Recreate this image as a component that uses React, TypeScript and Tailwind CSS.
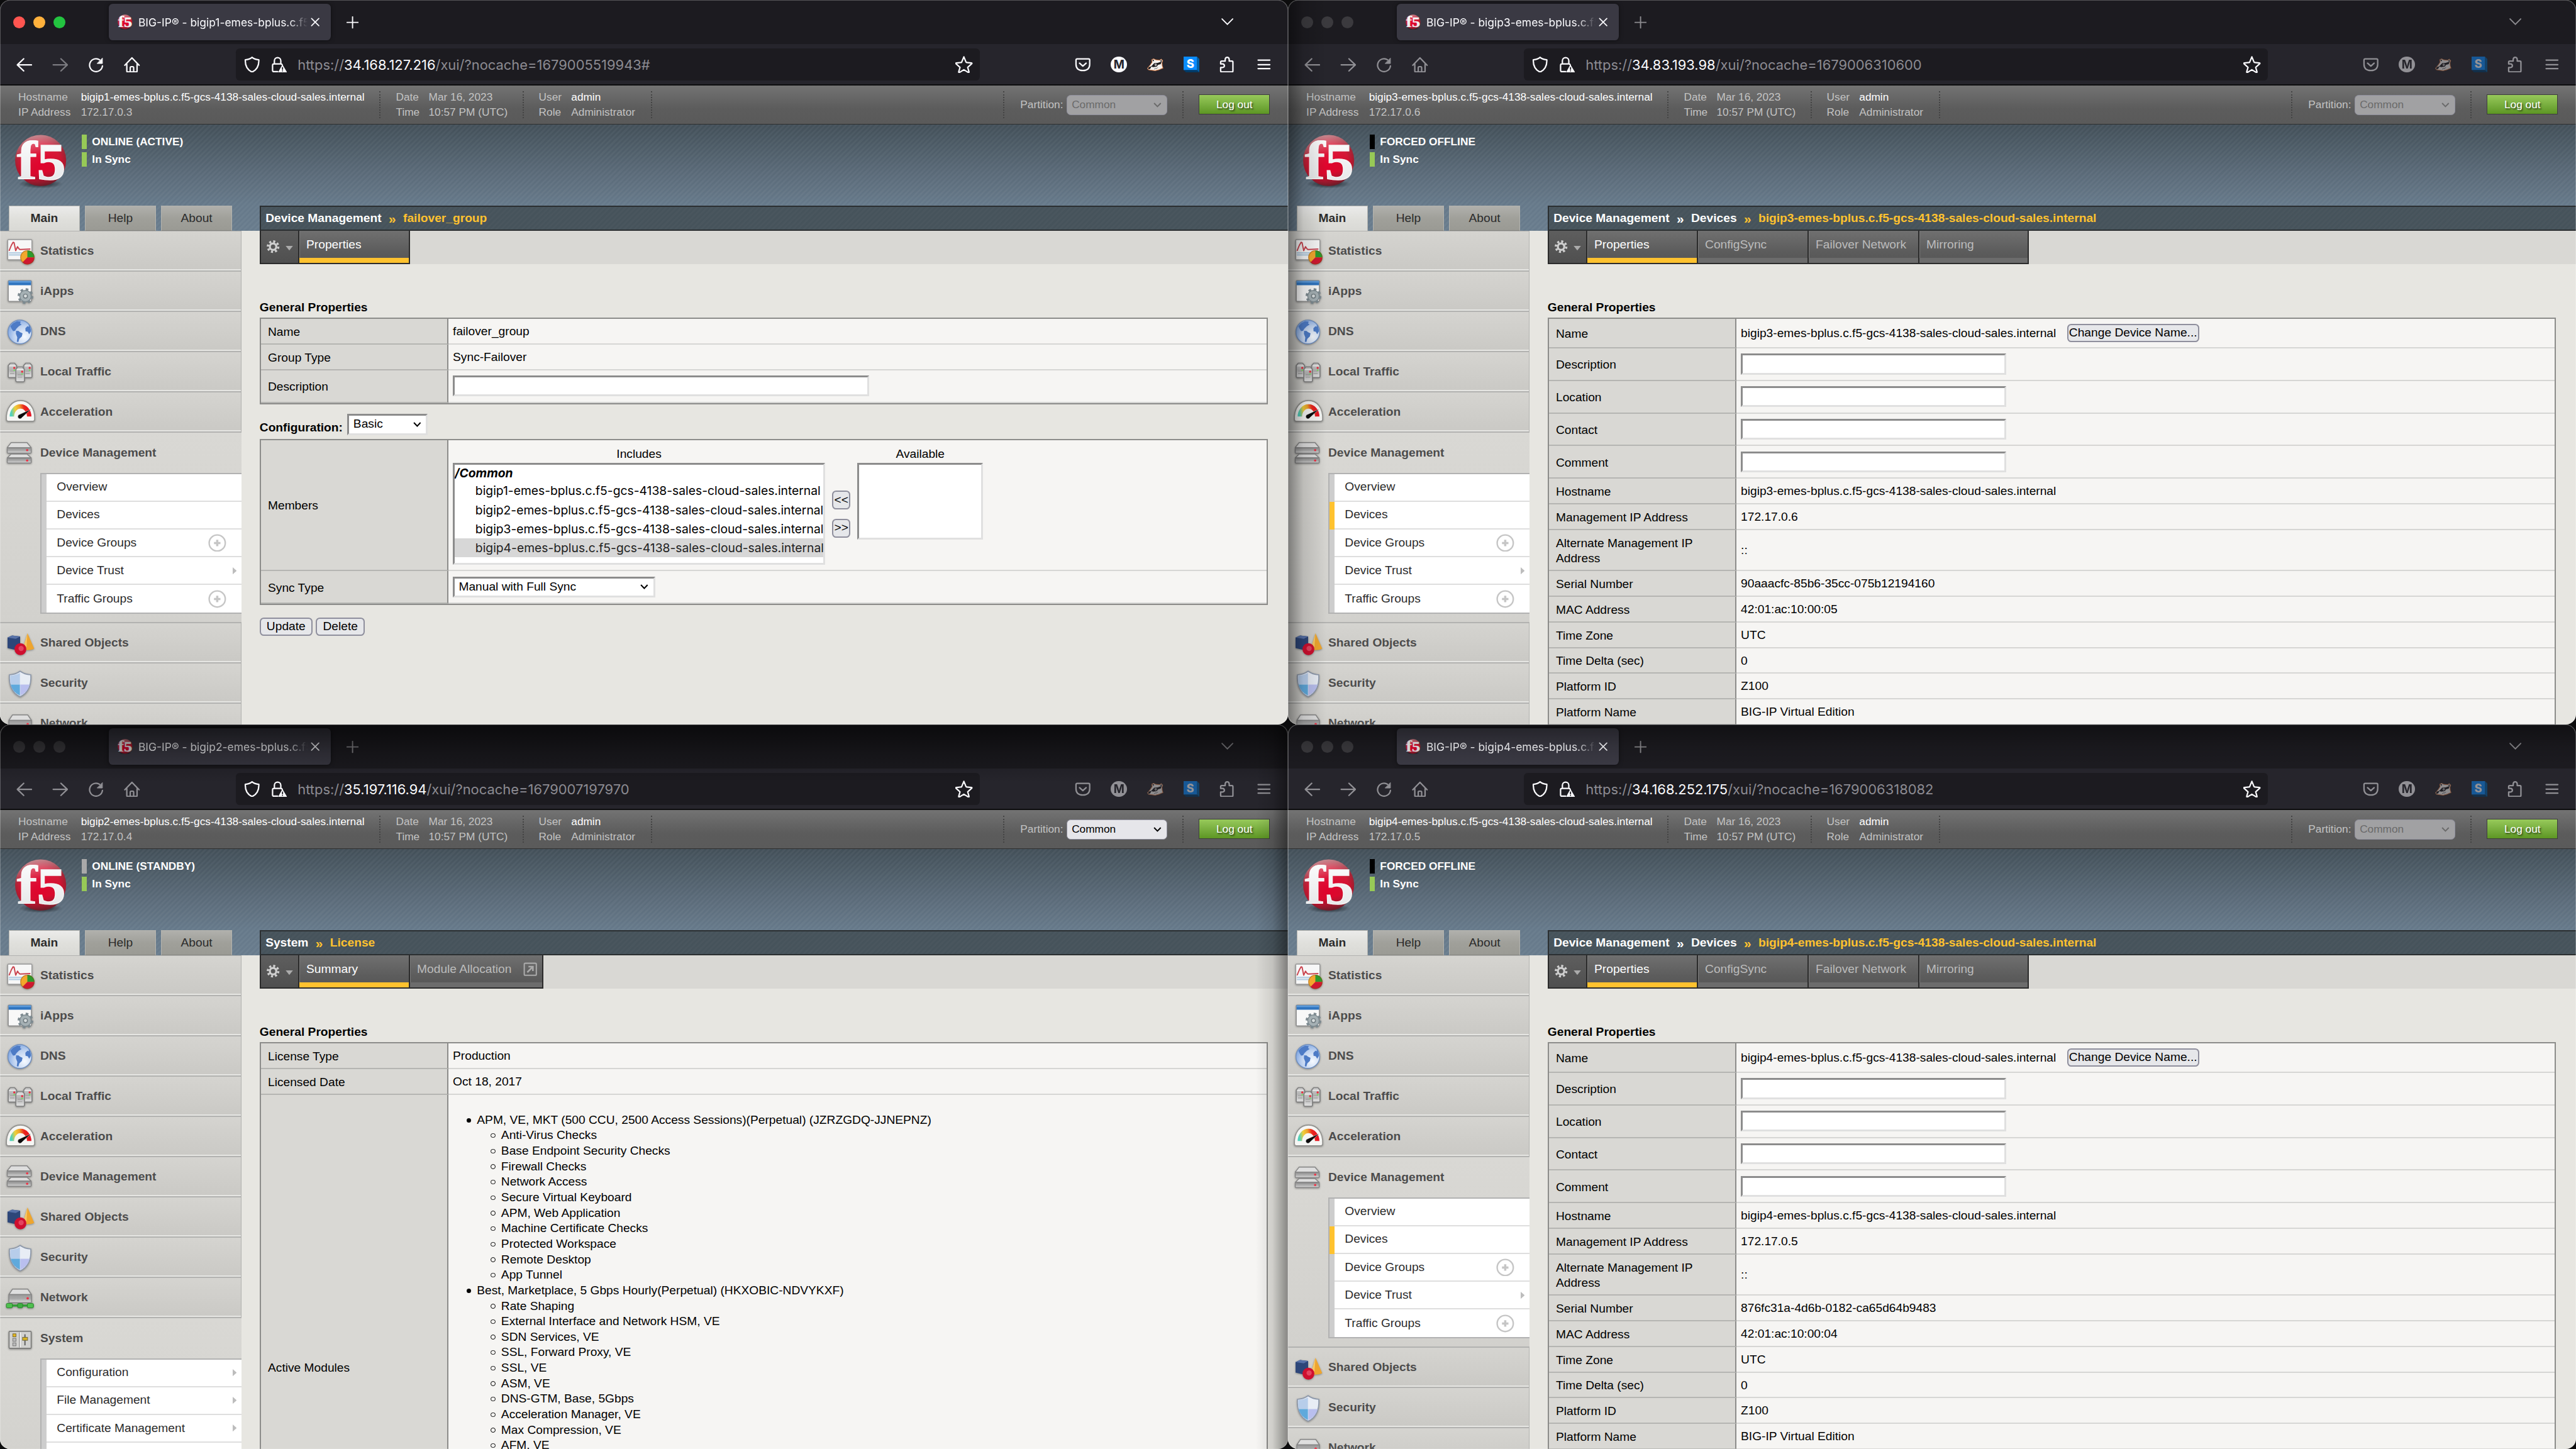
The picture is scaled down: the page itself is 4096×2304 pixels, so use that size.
import React from "react";

type Win = {
  n: number;
  ip: string;
  url: [string, string];
  active?: boolean;
  status: string;
  statusClass: string;
  partitionEnabled?: boolean;
  crumbs: string[];
  tabs: { label: string; width: string; popup?: boolean }[];
  expanded: string;
  selected?: string;
  shade: string;
};

const HOST = (n: number) => `bigip${n}-emes-bplus.c.f5-gcs-4138-sales-cloud-sales.internal`;

/* ---------- logo ---------- */

function F5Logo({ id, className }: { id: string; className: string }) {
  return (
    <svg viewBox="0 0 52 54" className={`overflow-visible ${className}`}>
      <defs>
        <radialGradient id={`${id}-ball`} cx="0.5" cy="0.55" r="0.55">
          <stop offset="0" stopColor="#e4002b" />
          <stop offset="0.7" stopColor="#d3102f" />
          <stop offset="1" stopColor="#8e1f2c" />
        </radialGradient>
        <linearGradient id={`${id}-gloss`} x1="0.3" y1="0" x2="0.5" y2="1">
          <stop offset="0" stopColor="#fff" stopOpacity="0.5" />
          <stop offset="0.4" stopColor="#fff" stopOpacity="0.05" />
          <stop offset="0.75" stopColor="#333" stopOpacity="0" />
          <stop offset="1" stopColor="#222" stopOpacity="0.5" />
        </linearGradient>
        <linearGradient id={`${id}-ink`} x1="0" y1="0" x2="0" y2="1">
          <stop offset="0" stopColor="#fff" />
          <stop offset="1" stopColor="#e2e4e6" />
        </linearGradient>
        <radialGradient id={`${id}-floor`}>
          <stop offset="0" stopColor="#000" stopOpacity="0.75" />
          <stop offset="1" stopColor="#000" stopOpacity="0" />
        </radialGradient>
      </defs>
      <ellipse cx="26" cy="49" rx="22" ry="4.5" fill={`url(#${id}-floor)`} />
      <circle cx="26" cy="25.7" r="25.4" fill={`url(#${id}-ball)`} />
      <circle cx="26" cy="25.7" r="25.4" fill={`url(#${id}-gloss)`} />
      <g fill={`url(#${id}-ink)`} fontFamily="Liberation Serif, serif" fontWeight="700">
        <text transform="translate(2.2 44.2) scale(1.13 1)" fontSize="54.5" stroke="#fff" strokeWidth="0.5">f</text>
        <text transform="translate(22.3 44.2) scale(1.1 1)" fontSize="52" stroke="#f4f4f4" strokeWidth="0.9">5</text>
      </g>
    </svg>
  );
}

/* ---------- browser chrome ---------- */

function Line({ d, className, w = 1.4 }: { d: string; className?: string; w?: number }) {
  return (
    <svg viewBox="0 0 16 16" fill="none" stroke="currentColor" strokeWidth={w} strokeLinecap="round" strokeLinejoin="round" className={className ?? "size-4"}>
      <path d={d} />
    </svg>
  );
}

function Badger() {
  return (
    <svg viewBox="0 0 16 16" className="size-4">
      <path d="M.4 11.5 3 8.500 5 5.500 4.600 3 6.500 2.200 8.500 3.200 12.500 3.600 14 2.500 15.600 4 14.800 6 15 9 15.800 11.500 14.200 12 12 13 8 14 4 13.500 1 13z" fill="#f4f1ee" stroke="#e07b3e" strokeWidth="0.6" />
      <path d="M.8 12.600 1.500 10.500 4.500 9.500 3 12.200z" fill="#1b1a1d" />
      <path d="M4 9.800 7 6.500 10.500 6.200 14.500 4.800 13.500 7.500 11 8.200 9.500 10 6 10.400z" fill="#1b1a1d" />
      <path d="M5 3.300 7 3.200 6.300 4.800zM12.800 4.300 14.200 3.300 14.800 5z" fill="#1b1a1d" />
      <circle cx="8.600" cy="8.200" r="1.100" fill="#f4f1ee" />
      <circle cx="8.700" cy="8.200" r="0.500" fill="#1b1a1d" />
      <path d="M7 12.500l1.500-.8 1 .2 1.200-1.200" stroke="#1b1a1d" strokeWidth="0.400" fill="none" />
    </svg>
  );
}

function Chrome({ w }: { w: Win }) {
  const dim = w.active ? "" : "opacity-50";
  return (
    <div className="font-['Inter',sans-serif] text-[#fbfbfe]">
      <div className="flex h-11 items-start bg-[#1c1b20]">
        <div className="ml-[13px] mt-4 flex gap-2">
          <span className={`size-3 rounded-full ${w.active ? "bg-[#ff5550]" : "bg-[#3b3a3e]"}`} />
          <span className={`size-3 rounded-full ${w.active ? "bg-[#ffb13c]" : "bg-[#3b3a3e]"}`} />
          <span className={`size-3 rounded-full ${w.active ? "bg-[#23c440]" : "bg-[#3b3a3e]"}`} />
        </div>
        <div className="ml-[43px] mt-1 flex h-9 w-[221px] items-center rounded bg-[#3a3943] pl-2 shadow-[0_0_4px_rgba(0,0,0,0.5)]">
          <F5Logo id={`fav${w.n}`} className="h-[15.5px] w-4" />
          <span className="ml-[5.5px] mt-px w-[170px] overflow-hidden whitespace-nowrap text-[10.9px] [mask-image:linear-gradient(to_right,black_88%,transparent_99%)]">
            BIG-IP® - bigip{w.n}-emes-bplus.c.f5-gcs
          </span>
          <svg viewBox="0 0 10 10" className="ml-[1px] size-[9px]" stroke="currentColor" strokeWidth="1.2" strokeLinecap="round">
            <path d="M1 1l8 8M9 1L1 9" />
          </svg>
        </div>
        <svg viewBox="0 0 12 12" className={`ml-[15.5px] mt-[16.500px] size-3 ${dim}`} stroke="currentColor" strokeWidth="1.2" strokeLinecap="round">
          <path d="M6 .5v11M.5 6h11" />
        </svg>
        <svg viewBox="0 0 12 7" className={`ml-auto mr-[54px] mt-[18.300px] h-[7px] w-3 ${dim}`} fill="none" stroke="currentColor" strokeWidth="1.2" strokeLinecap="round">
          <path d="M.7 .7 6 6 11.300 .7" />
        </svg>
      </div>
      <div className="flex h-10 items-center bg-[#26252c]">
        <div className={`ml-4 flex w-[218.2px] gap-[19.800px] ${dim}`}>
          <Line d="M1 8.200h14M7.300 2.200 1 8.200l6.300 6" />
          <Line d="M15 8.200H1M8.700 2.200 15 8.200l-6.300 6" className={w.active ? "size-4 opacity-40" : "size-4"} />
          <svg viewBox="0 0 16 16" className="size-4" fill="none" stroke="currentColor" strokeWidth="1.400" strokeLinecap="round">
            <path d="M14.300 9.300A6.400 6.400 0 1 1 11.500 3.200" />
            <path d="M14.300 1.700v5.200H9.200z" fill="currentColor" strokeWidth="0.600" strokeLinejoin="round" />
          </svg>
          <Line d="M.9 8.600 8 1.200l7.100 7.400M2.900 7.200v7.200q0 .8.800.8h8.600q.8 0 .8-.8V7.200M6.300 15v-4q0-1 1-1h1.400q1 0 1 1v4" />
        </div>
        <div className="flex h-8 w-[739.400px] items-center rounded bg-[#1c1b20] pl-2">
          <Line d="M8 .7C6 2.400 3.900 3 1.300 3.200 1 9.300 3 13 8 15.400c5-2.400 7-6.100 6.700-12.200C12.100 3 10 2.400 8 .7z" />
          <svg viewBox="0 0 16 16" className="ml-[11.300px] size-4" fill="none" stroke="currentColor" strokeWidth="1.400" strokeLinecap="round" strokeLinejoin="round">
            <path d="M3.300 7.300V4.200a3.200 3.200 0 0 1 6.400 0v3.100M6.500 15H2.800q-1.300 0-1.300-1.300V8.700q0-1.400 1.300-1.400h7q1 0 1.300 1" />
            <path d="M11.300 8.600 15.300 15.300H7.600z" fill="currentColor" strokeWidth="0.800" />
            <path d="M11.400 10.800v1.800M11.400 14.100v.1" stroke="#1c1b20" strokeWidth="1.100" />
          </svg>
          <span className="ml-[10.300px] mt-px whitespace-nowrap text-[13.700px] text-[#8c8b92]">
            https://<span className="text-[#fbfbfe]">{w.url[0]}</span>{w.url[1]}
          </span>
          <Line d="M8 .8 10 5.700q.15.400.6.400l4.500.4q.8.200.2.800L11.600 10.700l1.200 4.100q.1.900-.7.600L8 12.900 3.900 15.400q-.8.300-.7-.6l1.200-4.100L.7 7.300Q.1 6.700.9 6.500l4.500-.4q.5 0 .6-.4z" className="ml-auto mr-[7px] size-[17px]" w={1.3} />
        </div>
        <div className={`ml-auto mr-4 flex items-center gap-5 ${dim}`}>
          <Line d="M2.300 2.300h11.400q1.100 0 1.100 1.100v4.200q0 6-6.800 6.300Q1.200 13.600 1.200 7.600V3.400q0-1.100 1.100-1.100zM4.700 6.500 8 9.500l3.300-3" />
          <span className="flex size-4 items-center justify-center rounded-full bg-[#fbfbfe] text-[11.500px] font-bold text-[#26252c]">M</span>
          <Badger />
          <svg viewBox="0 0 16 16" className="size-4">
            <path d="M0 13.300h13.300L16 16H2.700z" fill="#003a66" />
            <path d="M13.300 0 16 2.700V16l-2.700-2.700z" fill="#005fa6" />
            <path d="M0 0h13.300v13.300H0z" fill="#0a8cff" />
            <text x="6.700" y="11" textAnchor="middle" fontSize="11.500" fontWeight="800" fill="#fff" fontFamily="Inter">S</text>
          </svg>
          <Line d="M2.200 15.200q-1 0-1-1V10.800h2.200q1.500-.3 1.500-1.700T3.400 7.300H1.200V5.500q0-1 1-1h3.500V2.700q.3-2 2-2t2 2v1.800h2.700q1 0 1 1v8.700q0 1-1 1z" />
          <Line d="M2.200 3.500h11.600M2.200 8h11.600M2.200 12h11.600" />
        </div>
      </div>
      <div className="h-px bg-[#0d0d0f]" />
    </div>
  );
}

/* ---------- header ---------- */

function Dots() {
  return <div className="h-[27px] w-0 self-start mt-[5.500px] border-l-[1.25px] border-dotted border-[#444]" />;
}

function HeaderPair({ rows, labelClass, className }: { rows: [string, string, boolean][]; labelClass: string; className: string }) {
  return (
    <div className={`mt-[4.600px] self-start leading-[14.500px] ${className}`}>
      {rows.map(([k, v, hi]) => (
        <div key={k} className="flex whitespace-nowrap text-[#c3c3c3]">
          <span className={labelClass}>{k}</span>
          <span className={hi ? "text-white" : ""}>{v}</span>
        </div>
      ))}
    </div>
  );
}

function Header({ w }: { w: Win }) {
  return (
    <div className="flex h-[38.500px] items-center border-b border-[#2f2f2f] bg-linear-to-b from-[#737373] from-0% via-[#5c5c5c] via-60% to-[#5a5a5a] text-[10.8px]">
      <HeaderPair className="ml-[18.200px] w-[358.500px]" labelClass="w-[62.200px]" rows={[["Hostname", HOST(w.n), true], ["IP Address", w.ip, false]]} />
      <Dots />
      <HeaderPair className="ml-[15.500px] w-[125.700px]" labelClass="w-[32.500px]" rows={[["Date", "Mar 16, 2023", false], ["Time", "10:57 PM (UTC)", false]]} />
      <Dots />
      <HeaderPair className="ml-[15px] w-[111.200px]" labelClass="w-[32.300px]" rows={[["User", "admin", true], ["Role", "Administrator", false]]} />
      <Dots />
      <div className="ml-auto flex items-center self-stretch">
        <Dots />
        <span className="ml-[15.600px] mt-[1px] w-[46px] text-[#c3c3c3]">Partition:</span>
        <div
          className={`mt-px flex h-[20.500px] w-[100px] items-center rounded border border-[#8f8f9d] pl-[4.500px] pr-[5px] ${
            w.partitionEnabled ? "bg-[#e6e6ea] text-black" : "bg-[#a1a1a3] text-[#6a6a6a]"
          }`}
        >
          <span>Common</span>
          <svg viewBox="0 0 8 5" className="ml-auto h-[5px] w-2" fill="none" stroke="currentColor" strokeWidth="1.200"><path d="M.7.6 4 4 7.300.6" /></svg>
        </div>
        <div className="w-[15.300px]" />
        <Dots />
        <div className="ml-[15px] mr-[18px] flex h-[20px] w-[70.500px] items-center justify-center border border-[#3d3d3d] bg-linear-to-b from-[#97c95a] to-[#5d9623] pt-px text-white [text-shadow:1px_1px_1.500px_rgba(0,0,0,0.6)]">
          Log out
        </div>
      </div>
    </div>
  );
}

function Banner({ w }: { w: Win }) {
  return (
    <div className="h-[106px] bg-[repeating-linear-gradient(135deg,rgba(255,255,255,0.035)_0_1.8px,transparent_1.8px_3.6px),linear-gradient(to_bottom,#435059,#5a6a78_45%,#66798a_75%,#697c8d)]">
      <div className="flex h-[81px] text-[10.8px] font-bold text-white">
        <F5Logo id={`logo${w.n}`} className="ml-[14.500px] mt-2.5 h-[54px] w-[52px]" />
        <div className="ml-[14.500px] mt-2.5 flex flex-col gap-[3px]">
          <div className="flex h-[14.500px] items-center gap-[5.500px]"><span className={`h-full w-[5px] ${w.statusClass}`} /><span className="pt-[1.200px]">{w.status}</span></div>
          <div className="flex h-[14.500px] items-center gap-[5.500px]"><span className="h-full w-[5px] bg-[#97c957]" /><span className="pt-[1.200px]">In Sync</span></div>
        </div>
      </div>
      <div className="flex h-[25px] text-[12px] text-[#2b2b2b]">
        <div className="ml-[8.500px] flex w-[249.500px] gap-[4.700px]">
          <span className="flex w-[71px] items-center justify-center border-x border-t border-[#b3b3ae] bg-linear-to-b from-[#ebebea] via-[#e0e0dc] via-50% to-[#d9d9d5] font-bold">Main</span>
          {["Help", "About"].map((t) => (
            <span key={t} className="flex w-[71px] items-center justify-center border border-b-[#84847f] border-[#b3b3ae] bg-linear-to-b from-[#b0b0ac] via-[#a0a09a] via-50% to-[#9a9a94]">{t}</span>
          ))}
        </div>
        <div className="flex flex-1 items-center border-y-[1.25px] border-l-[1.25px] border-[#2b2f31] bg-[repeating-linear-gradient(135deg,rgba(255,255,255,0.02)_0_1.8px,transparent_1.8px_3.6px)] bg-[#46535b] pl-[4.600px] font-bold text-white">
          {w.crumbs.map((c, i) => {
            const last = i === w.crumbs.length - 1;
            return (
              <React.Fragment key={c}>
                {i > 0 && <span className={`w-[21.500px] text-center text-[13px] ${last ? "text-[#ffc22f]" : ""}`}>»</span>}
                <span className={last ? "text-[#ffc22f]" : ""}>{c}</span>
              </React.Fragment>
            );
          })}
        </div>
      </div>
    </div>
  );
}

/* ---------- sidebar ---------- */

function Disk({ uid, top, mid, bottom }: { uid: string; top: number; mid: number; bottom: number }) {
  return (
    <g stroke="#858585" strokeWidth="0.9" strokeLinejoin="round">
      <path d={`M11 ${top}h15.800L31 ${mid}H7.200z`} fill="#dedede" />
      <rect x="7.200" y={mid} width="23.800" height={bottom - mid} rx="0.800" fill={`url(#${uid}-steel)`} />
      <path d={`M8.200 ${mid + 0.900}h21.800`} stroke="#8f8f8f" strokeWidth="0.700" />
      <circle cx="27" cy={mid + 2.600} r="1.100" fill="#ee3145" stroke="none" />
    </g>
  );
}

function Tower({ x, y, w, h, uid }: { x: number; y: number; w: number; h: number; uid: string }) {
  return (
    <g transform={`translate(${x} ${y})`}>
      <path d={`M2 0h${w - 4}l2 2.400V${h - 1}q0 1-1 1H1q-1 0-1-1V2.400z`} fill={`url(#${uid}-tower)`} stroke="#7f7f7f" strokeWidth="1" strokeLinejoin="round" />
      <path d={`M1.800 7.800h${w - 4}M1.800 10.200h${w - 4}`} stroke="#9a9a9a" strokeWidth="0.700" />
      <path d={`M1 2.600h${w - 2}`} stroke="#f2f2f2" strokeWidth="0.900" />
      <circle cx={w - 2.300} cy="4.700" r="1.100" fill="#e8303f" />
      <circle cx={w - 2.300} cy="7" r="0.900" fill="#7fd26a" />
    </g>
  );
}

function NavIcon({ name, uid }: { name: string; uid: string }) {
  const art: Record<string, React.ReactNode> = {
    Statistics: (
      <>
        <rect x="7.700" y="9.400" width="24" height="20" rx="0.800" fill="#f7f7f7" stroke="#9a9a9a" strokeWidth="0.900" />
        <path d="M8.800 22.600h22M8.800 24.600h22" stroke="#b6cfe4" strokeWidth="1.300" />
        <path d="M9 20.500l2.300-5.500 1.700-3 1 .4 1.600 8 1.800-4 1.800 2.500 1 .3 10-.5" fill="none" stroke="#c9434e" strokeWidth="1.200" strokeLinejoin="round" />
        <circle cx="27.200" cy="27" r="7" fill="#f3a72c" />
        <path d="M27.200 27V20a7 7 0 0 1 7 7z" fill="#2c9a2c" />
        <path d="M27.200 27h7a7 7 0 0 1-11.900 5z" fill="#cf1830" />
        <circle cx="27.200" cy="27" r="6.700" fill="none" stroke="#7a4a20" strokeOpacity="0.450" strokeWidth="0.700" />
      </>
    ),
    iApps: (
      <>
        <rect x="8.200" y="10.200" width="23" height="20.500" rx="0.800" fill="#f8f8f8" stroke="#8d8d8d" strokeWidth="0.900" />
        <rect x="8.500" y="10.400" width="22.400" height="4.300" fill="#2f74bf" />
        <rect x="8.500" y="10.400" width="22.400" height="1.700" fill="#5d9bdb" />
        <circle cx="25.300" cy="25.500" r="6.300" fill="none" stroke="#7d8a90" strokeWidth="3" strokeDasharray="2.475 2.475" />
        <circle cx="25.300" cy="25.500" r="5.700" fill="#a5b0b4" stroke="#7d8a90" strokeWidth="0.900" />
        <circle cx="25.300" cy="25.500" r="2" fill="#d7dcdd" stroke="#707b80" strokeWidth="0.900" />
      </>
    ),
    DNS: (
      <>
        <circle cx="19.700" cy="21.200" r="11.800" fill={`url(#${uid}-globe)`} stroke="#6f8fc0" strokeWidth="0.900" />
        <path d="M10.300 15.500l2.700-3 4-2 3.500.3-.5 2 1.500 1-2.800 1.700-2.500 2.500-1.200 2-2 .3-1.500-2.300z" fill="#4d7bc6" />
        <path d="M16 20l2.500.2 1.200 1 2.700 1.300-.7 3.200-2.500 2.300-1 3.200-1.500-.4.500-4.300-1.400-3.500z" fill="#4d7bc6" />
        <path d="M25.200 17.500l2-2 1.500.5-.2-2.500q2.300 3.500 2.200 7.200l-1.700 2.800-1.400-2.500-2.200-.5z" fill="#4d7bc6" />
      </>
    ),
    "Local Traffic": (
      <>
        <Tower x={8.200} y={12.200} w={8.300} h={14.300} uid={uid} />
        <Tower x={23.500} y={12.200} w={8.300} h={14.300} uid={uid} />
        <Tower x={15.700} y={15.900} w={8.600} h={14.700} uid={uid} />
      </>
    ),
    Acceleration: (
      <>
        <path d="M6.400 28.200C5.800 16.500 12 9.300 20.400 9.300S35 16.500 34.400 28.200q0 1.600-1.600 1.600H8q-1.600 0-1.600-1.600z" fill="#f6f6f4" stroke="#92928f" strokeWidth="1" />
        <path d="M11.800 25.200A8.600 10 0 0 1 29 25.200" fill="none" stroke={`url(#${uid}-dial)`} strokeWidth="4.400" />
        <path d="M31 17.800 21.800 26.300a2.200 2.200 0 1 1-2.400-3.200z" fill="#0c0c0c" stroke="#f6f6f4" strokeWidth="0.300" />
      </>
    ),
    "Device Management": (
      <>
        <Disk uid={uid} top={9.9} mid={14.8} bottom={20.3} />
        <Disk uid={uid} top={21.2} mid={25} bottom={30.2} />
      </>
    ),
    "Shared Objects": (
      <>
        <path d="M7.500 15.500 12 13.500l8 .8v9.500l-4.500 4-8-1.800z" fill="#2d4679" />
        <path d="M7.500 15.500 12 13.500l8 .8-4.300 2.400z" fill="#5872a8" />
        <path d="M27.300 11.300 34 26.500q-4.500 2.400-11.500 1z" fill="#eea52e" />
        <path d="M27.300 11.300 22.500 27.500l3.600.5z" fill="#f7c765" />
        <circle cx="20.300" cy="27" r="5.900" fill="#cf0f2f" />
        <circle cx="21" cy="26.300" r="2.600" fill="#ec5b74" fillOpacity="0.700" />
      </>
    ),
    Security: (
      <>
        <path d="M20 8.900q4.500 3.300 10.600 3.600Q31.500 29 20 34.200 8.500 29 9.400 12.500 15.500 12.200 20 8.900z" fill="#e8edf5" stroke="#8b97aa" strokeWidth="1" />
        <path d="M19.800 10.600v11.600H10.500Q9.900 17.500 10.300 13.300q5.200-.3 9.500-2.700z" fill="#b7cdea" />
        <path d="M20.200 22.200h9.200q-1.700 7.400-9.200 10.900z" fill="#b9bfee" />
        <path d="M19.800 22.200v10.900q-7.400-3.500-9.200-10.900z" fill="#5fa9dc" />
      </>
    ),
    Network: (
      <>
        <path d="M6.500 28.700h27" stroke="#2f9e35" strokeWidth="2" />
        <rect x="6.300" y="26.500" width="6" height="4.500" rx="1" fill="#4fc04f" stroke="#2a842d" strokeWidth="0.600" />
        <rect x="27.200" y="26.500" width="6" height="4.500" rx="1" fill="#4fc04f" stroke="#2a842d" strokeWidth="0.600" />
        <rect x="17.500" y="26.500" width="5" height="4.500" rx="1" fill="#3fae43" stroke="#2a842d" strokeWidth="0.600" />
        <path d="M12.500 12.300h15l3.800 5.500H8.800z" fill="#dedede" stroke="#858585" strokeWidth="0.900" strokeLinejoin="round" />
        <rect x="8.800" y="17.800" width="22.500" height="8" rx="0.800" fill={`url(#${uid}-steel)`} stroke="#858585" strokeWidth="0.900" />
        <circle cx="27.500" cy="21.500" r="1.200" fill="#ee3145" />
      </>
    ),
    System: (
      <>
        <rect x="9" y="13" width="22" height="17" rx="0.900" fill="#d2d2d0" stroke="#7f7f7d" strokeWidth="1.100" />
        <path d="M19.300 14v15" stroke="#8f8f8d" strokeWidth="0.800" />
        <path d="M20.200 14v15" stroke="#fff" strokeWidth="0.700" />
        <path d="M24.800 16v11" stroke="#555" strokeWidth="1.100" />
        <rect x="22.400" y="19" width="5" height="3" fill="#d9b21f" stroke="#6a6440" strokeWidth="0.600" />
        <rect x="12.700" y="15.500" width="3.200" height="3" fill="#e2b51d" stroke="#75693a" strokeWidth="0.600" />
        <rect x="12.700" y="20" width="3.200" height="3" fill="#bbb" stroke="#777" strokeWidth="0.600" />
        <rect x="12.700" y="24.500" width="3.200" height="3" fill="#bbb" stroke="#777" strokeWidth="0.600" />
      </>
    ),
  };
  return (
    <svg viewBox="0 0 40 40" className="size-10 shrink-0 [filter:drop-shadow(0_1px_1px_rgba(0,0,0,0.35))]">
      <defs>
        <radialGradient id={`${uid}-globe`} cx="0.700" cy="0.700" r="0.750">
          <stop offset="0" stopColor="#f6faff" />
          <stop offset="0.600" stopColor="#c0d3f0" />
          <stop offset="1" stopColor="#84a9e2" />
        </radialGradient>
        <linearGradient id={`${uid}-steel`} x1="0" y1="0" x2="0" y2="1">
          <stop offset="0" stopColor="#9b9b9b" />
          <stop offset="0.500" stopColor="#a8a8a8" />
          <stop offset="1" stopColor="#dcdcdc" />
        </linearGradient>
        <linearGradient id={`${uid}-tower`} x1="0" y1="0" x2="0" y2="1">
          <stop offset="0" stopColor="#cfcfcf" />
          <stop offset="0.450" stopColor="#b4b4b4" />
          <stop offset="1" stopColor="#e2e2e2" />
        </linearGradient>
        <linearGradient id={`${uid}-dial`} gradientUnits="userSpaceOnUse" x1="9.800" y1="24" x2="31" y2="20">
          <stop offset="0.080" stopColor="#4fd0bd" />
          <stop offset="0.300" stopColor="#f0cf3a" />
          <stop offset="0.500" stopColor="#f0a52c" />
          <stop offset="0.700" stopColor="#ea2a1e" />
          <stop offset="1" stopColor="#e30b23" />
        </linearGradient>
      </defs>
      {art[name]}
    </svg>
  );
}

const SUB: Record<string, [string, string][]> = {
  "Device Management": [["Overview", ""], ["Devices", ""], ["Device Groups", "add"], ["Device Trust", "more"], ["Traffic Groups", "add"]],
  System: [["Configuration", "more"], ["File Management", "more"], ["Certificate Management", "more"], ["Disk Management", "more"]],
};

const NAV = ["Statistics", "iApps", "DNS", "Local Traffic", "Acceleration", "Device Management", "Shared Objects", "Security", "Network", "System"];

function Sidebar({ w }: { w: Win }) {
  return (
    <div className="w-60 shrink-0 overflow-hidden bg-[#d9d8d4]">
      <div className="-mt-px">
        {NAV.map((name, i) => {
          const uid = `nav${w.n}-${i}`;
          if (name !== w.expanded)
            return (
              <div key={name} className="flex h-10 items-center border-r border-t-[1.250px] border-[#b2b2b0] bg-linear-to-b from-[#d5d4d0] to-[#cac9c5]">
                <div className="flex h-full flex-1 items-center border-b-[1.250px] border-[#e6e6e3] text-[12px] font-bold text-[#4c4c4c]">
                  <NavIcon name={name} uid={uid} />
                  <span className="mt-[2px]">{name}</span>
                </div>
              </div>
            );
          return (
            <div key={name} className="border-t-[1.250px] border-[#b2b2b0] pb-2 bg-linear-to-b from-[#d9d8d4] to-[#d2d1cd]">
              <div className="flex h-10 items-center text-[12px] font-bold text-[#4c4c4c]">
                <NavIcon name={name} uid={uid} />
                <span className="mt-px">{name}</span>
              </div>
              <div className="ml-[40px] border-y-[1.250px] border-l-[1.250px] border-[#b2b2b2] bg-white text-[12px] text-[#2b2b2b]">
                {SUB[name].map(([label, kind], k) => (
                  <div key={label} className="flex h-[27.600px]">
                    <span className={`w-[5px] ${label === w.selected ? "bg-[#ffc22f]" : "bg-[#cdcdcd]"}`} />
                    <div className={`flex flex-1 items-center pl-[10.200px] ${k < SUB[name].length - 1 ? "border-b-[1.250px] border-[#dedede]" : ""}`}>
                      {label}
                      {kind === "add" && (
                        <svg viewBox="0 0 18 18" className="ml-auto mr-[15px] size-[18px]" fill="none" stroke="#c6c6c6">
                          <circle cx="9" cy="9" r="8" strokeWidth="1.500" />
                          <path d="M9 5.800v6.400M5.800 9h6.400" strokeWidth="2.200" />
                        </svg>
                      )}
                      {kind === "more" && (
                        <svg viewBox="0 0 4 7" className="ml-auto mr-[5px] h-[7px] w-1"><path d="M0 0 4 3.500 0 7z" fill="#bdbdbd" /></svg>
                      )}
                    </div>
                  </div>
                ))}
              </div>
            </div>
          );
        })}
      </div>
    </div>
  );
}

/* ---------- content ---------- */

function Toolbar({ w }: { w: Win }) {
  return (
    <div className="flex h-[33px] bg-[#d9d8d4] text-[12px]">
      <div className="flex h-full border-x-[1.250px] border-b-[1.250px] border-[#2b2b2b] bg-linear-to-b from-[#707070] via-[#5c5c5c] via-65% to-[#565656]">
        <div className="flex w-[37.300px] items-center bg-linear-to-b from-[#5e5e5e] to-[#4f4f4f] pl-[5.300px]">
          <svg viewBox="0 0 14 14" className="size-[14px]" fill="none" stroke="#cfcfcf">
            <circle cx="7" cy="7" r="3.200" strokeWidth="2" />
            <circle cx="7" cy="7" r="5.200" strokeWidth="2.200" strokeDasharray="2.040 2.040" />
          </svg>
          <svg viewBox="0 0 8 5" className="ml-[5.500px] mt-[3px] h-[4.500px] w-[7.500px]"><path d="M0 0h8L4 5z" fill="#ababab" /></svg>
        </div>
        {w.tabs.map((t, i) => (
          <div key={t.label} className={`flex flex-col border-l-[1.250px] border-[#2b2b2b] ${t.width}`}>
            <div className={`flex h-[26.800px] items-center border-l border-[#7c7c7c] pl-[6px] pr-[4.500px] pt-[1.200px] ${i === 0 ? "text-white" : "text-[#bcbcbc]"}`}>
              {t.label}
              {t.popup && (
                <svg viewBox="0 0 14 14" className="ml-auto size-[14px]" fill="none" stroke="#a9a9a9" strokeWidth="1.300">
                  <rect x="1" y="1" width="12" height="12" rx="1" />
                  <path d="M4 10l5-5M5.200 4.400h4.400v4.400" strokeWidth="1.600" />
                </svg>
              )}
            </div>
            <div className={`h-[5.200px] ${i === 0 ? "bg-[#ffc22f]" : "bg-[#6c6c6c]"}`} />
          </div>
        ))}
      </div>
    </div>
  );
}

function Row({ h, label, children, last }: { h: string; label: string; children?: React.ReactNode; last?: boolean }) {
  return (
    <div className={`flex ${h}`}>
      <div className={`flex w-[186.500px] shrink-0 items-center border-r-[1.250px] border-r-[#8c8c8a] bg-[#d9d8d4] pl-[7px] pr-6 pt-[1.200px] leading-[14.500px] ${last ? "" : "border-b-[1.250px] border-b-[#b5b5b2]"}`}>{label}</div>
      <div className={`flex flex-1 items-center bg-[#f6f5f3] pl-[4.300px] ${last ? "" : "border-b-[1.250px] border-b-[#d6d6d4]"}`}>
        {typeof children === "string" ? <span className="pt-[1.200px]">{children}</span> : children}
      </div>
    </div>
  );
}

function Panel({ children }: { children: React.ReactNode }) {
  return <div className="w-[1002px] border-[1.250px] border-[#8c8c8a] text-[12px] text-black">{children}</div>;
}

const BEVEL = "border-2 border-t-[#8c8c8c] border-l-[#8c8c8c] border-r-[#e0e0e0] border-b-[#e0e0e0] bg-white";
const BUTTON = "flex items-center justify-center rounded border-[1.250px] border-[#8f8f9d] bg-[#e6e7ea] text-[12px] text-black";

function Field({ size }: { size: string }) {
  return <div className={`${BEVEL} h-[21px] ${size}`} />;
}

function Select({ value, size }: { value: string; size: string }) {
  return (
    <div className={`${BEVEL} flex h-[21px] items-center pl-1 pr-[5px] text-[12px] ${size}`}>
      {value}
      <svg viewBox="0 0 8 5" className="ml-auto h-[5px] w-2" fill="none" stroke="#000" strokeWidth="1.300"><path d="M.7.6 4 4 7.300.6" /></svg>
    </div>
  );
}

function Heading() {
  return <div className="mb-[2.900px] mt-[36.400px] text-[12px] font-bold leading-[14px] text-black">General Properties</div>;
}

function GroupPage() {
  return (
    <>
      <Heading />
      <Panel>
        <Row h="h-[25.500px]" label="Name">failover_group</Row>
        <Row h="h-[25.500px]" label="Group Type">Sync-Failover</Row>
        <Row h="h-[32.300px]" label="Description"><Field size="w-[414px]" /></Row>
      </Panel>
      <div className="flex h-[34.500px] items-end pb-[3.800px]">
        <span className="w-[87.300px] text-[12px] font-bold leading-[15px] text-black">Configuration:</span>
        <Select value="Basic" size="w-[80px]" />
      </div>
      <Panel>
        <Row h="h-[130.500px]" label="Members">
          <div className="flex self-start">
            <div className="w-[370px] pt-[7.200px]">
              <div className="mb-[1.500px] text-center leading-[14px]">Includes</div>
              <div className={`${BEVEL} h-[101px] overflow-hidden whitespace-nowrap font-['Inter',sans-serif] text-[12.050px]`}>
                <div className="flex h-4 items-center pt-[1.200px] font-bold italic">/Common</div>
                {[1, 2, 3, 4].map((n) => (
                  <div key={n} className={`flex h-[19px] items-center pl-[20.500px] pt-px ${n === 4 ? "bg-[#d7d7d7] text-[#222]" : ""}`}>{HOST(n)}</div>
                ))}
              </div>
            </div>
            <div className="flex w-[32px] flex-col items-center gap-[9.500px] pt-[50.300px]">
              <div className={`${BUTTON} h-[18.500px] w-[18.500px]`}>&lt;&lt;</div>
              <div className={`${BUTTON} h-[18.500px] w-[18.500px]`}>&gt;&gt;</div>
            </div>
            <div className="w-[125px] pt-[7.200px]">
              <div className="mb-[1.500px] text-center leading-[14px]">Available</div>
              <div className={`${BEVEL} h-[76px]`} />
            </div>
          </div>
        </Row>
        <Row h="h-[32.500px]" label="Sync Type"><Select value="Manual with Full Sync" size="w-[201px]" /></Row>
      </Panel>
      <div className="mt-3 flex gap-[3.500px]">
        <div className={`${BUTTON} h-[18.500px] w-[52.500px]`}>Update</div>
        <div className={`${BUTTON} h-[18.500px] w-[48.500px]`}>Delete</div>
      </div>
    </>
  );
}

function DevicePage({ n, ip, serial, mac }: { n: number; ip: string; serial: string; mac: string }) {
  const info: [string, string][] = [["Serial Number", serial], ["MAC Address", mac], ["Time Zone", "UTC"], ["Time Delta (sec)", "0"], ["Platform ID", "Z100"], ["Platform Name", "BIG-IP Virtual Edition"]];
  return (
    <>
      <Heading />
      <Panel>
        <Row h="h-[29.200px]" label="Name">
          <span className="pt-px">{HOST(n)}</span>
          <div className={`${BUTTON} ml-[11px] h-[18.500px] w-[131px]`}>Change Device Name...</div>
        </Row>
        {["Description", "Location", "Contact", "Comment"].map((l) => (
          <Row key={l} h="h-[32.400px]" label={l}><Field size="w-[264px]" /></Row>
        ))}
        <Row h="h-[25.600px]" label="Hostname">{HOST(n)}</Row>
        <Row h="h-[25.600px]" label="Management IP Address">{ip}</Row>
        <Row h="h-[40.500px]" label="Alternate Management IP Address">::</Row>
        {info.map(([k, v]) => (
          <Row key={k} h="h-[25.550px]" label={k}>{v}</Row>
        ))}
      </Panel>
    </>
  );
}

const MODULES: [string, string[]][] = [
  ["APM, VE, MKT (500 CCU, 2500 Access Sessions)(Perpetual) (JZRZGDQ-JJNEPNZ)", ["Anti-Virus Checks", "Base Endpoint Security Checks", "Firewall Checks", "Network Access", "Secure Virtual Keyboard", "APM, Web Application", "Machine Certificate Checks", "Protected Workspace", "Remote Desktop", "App Tunnel"]],
  ["Best, Marketplace, 5 Gbps Hourly(Perpetual) (HKXOBIC-NDVYKXF)", ["Rate Shaping", "External Interface and Network HSM, VE", "SDN Services, VE", "SSL, Forward Proxy, VE", "SSL, VE", "ASM, VE", "DNS-GTM, Base, 5Gbps", "Acceleration Manager, VE", "Max Compression, VE", "AFM, VE"]],
];

function LicensePage() {
  return (
    <>
      <Heading />
      <Panel>
        <Row h="h-[25.500px]" label="License Type">Production</Row>
        <Row h="h-[25.500px]" label="Licensed Date">Oct 18, 2017</Row>
        <Row h="h-[542px]" label="Active Modules">
          <ul className="self-start pt-[17.500px] leading-[15.400px]">
            {MODULES.map(([title, items]) => (
              <li key={title}>
                <div className="flex items-center">
                  <span className="ml-[13.700px] mr-[5.900px] size-[4.300px] rounded-full bg-black" />
                  {title}
                </div>
                <ul>
                  {items.map((t) => (
                    <li key={t} className="flex items-center">
                      <span className="ml-[37.700px] mr-[5.700px] size-[4.600px] rounded-full border border-black" />
                      {t}
                    </li>
                  ))}
                </ul>
              </li>
            ))}
          </ul>
        </Row>
      </Panel>
    </>
  );
}

function BrowserWindow({ w, children }: { w: Win; children: React.ReactNode }) {
  return (
    <div className="relative h-[720px] w-[1280px] overflow-hidden rounded-[10px] bg-[#e7e6e1]">
      <Chrome w={w} />
      <Header w={w} />
      <Banner w={w} />
      <div className="flex h-[490.500px]">
        <Sidebar w={w} />
        <div className="min-w-0 flex-1 overflow-hidden pl-[18px]">
          <Toolbar w={w} />
          {children}
        </div>
      </div>
      <div className={`absolute inset-0 ${w.shade}`} />
      <div className="absolute inset-0 rounded-[10px] border border-white/25 border-b-white/10" />
    </div>
  );
}

const deviceTabs = [
  { label: "Properties", width: "w-[110px]" },
  { label: "ConfigSync", width: "w-[110px]" },
  { label: "Failover Network", width: "w-[110px]" },
  { label: "Mirroring", width: "w-[108.700px]" },
];

const wins: Win[] = [
  {
    n: 1, ip: "172.17.0.3", url: ["34.168.127.216", "/xui/?nocache=1679005519943#"], active: true,
    status: "ONLINE (ACTIVE)", statusClass: "bg-[#97c957]",
    crumbs: ["Device Management", "failover_group"],
    tabs: [{ label: "Properties", width: "w-[109.500px]" }],
    expanded: "Device Management", shade: "",
  },
  {
    n: 3, ip: "172.17.0.6", url: ["34.83.193.98", "/xui/?nocache=1679006310600"],
    status: "FORCED OFFLINE", statusClass: "bg-black",
    crumbs: ["Device Management", "Devices", HOST(3)],
    tabs: deviceTabs, expanded: "Device Management", selected: "Devices",
    shade: "bg-[linear-gradient(to_right,rgba(0,0,0,0.42),rgba(0,0,0,0.12)_1.2%,transparent_3%)]",
  },
  {
    n: 2, ip: "172.17.0.4", url: ["35.197.116.94", "/xui/?nocache=1679007197970"],
    status: "ONLINE (STANDBY)", statusClass: "bg-[#a9a9a9]", partitionEnabled: true,
    crumbs: ["System", "License"],
    tabs: [{ label: "Summary", width: "w-[110px]" }, { label: "Module Allocation", width: "w-[132px]", popup: true }],
    expanded: "System",
    shade: "bg-[linear-gradient(to_bottom,rgba(0,0,0,0.62),rgba(0,0,0,0.25)_4%,transparent_8%),linear-gradient(to_left,rgba(0,0,0,0.42),rgba(0,0,0,0.1)_1.2%,transparent_2.5%)]",
  },
  {
    n: 4, ip: "172.17.0.5", url: ["34.168.252.175", "/xui/?nocache=1679006318082"],
    status: "FORCED OFFLINE", statusClass: "bg-black",
    crumbs: ["Device Management", "Devices", HOST(4)],
    tabs: deviceTabs, expanded: "Device Management", selected: "Devices",
    shade: "bg-[linear-gradient(to_bottom,rgba(0,0,0,0.4),rgba(0,0,0,0.12)_3%,transparent_5.5%)]",
  },
];

export default function App() {
  return (
    <div className="grid h-[1440px] w-[2560px] grid-cols-2 overflow-hidden bg-[#0c0c0d] font-['Liberation_Sans',Arial,sans-serif] leading-normal [zoom:1.6]">
      <BrowserWindow w={wins[0]}><GroupPage /></BrowserWindow>
      <BrowserWindow w={wins[1]}>
        <DevicePage n={3} ip="172.17.0.6" serial="90aaacfc-85b6-35cc-075b12194160" mac="42:01:ac:10:00:05" />
      </BrowserWindow>
      <BrowserWindow w={wins[2]}><LicensePage /></BrowserWindow>
      <BrowserWindow w={wins[3]}>
        <DevicePage n={4} ip="172.17.0.5" serial="876fc31a-4d6b-0182-ca65d64b9483" mac="42:01:ac:10:00:04" />
      </BrowserWindow>
    </div>
  );
}
